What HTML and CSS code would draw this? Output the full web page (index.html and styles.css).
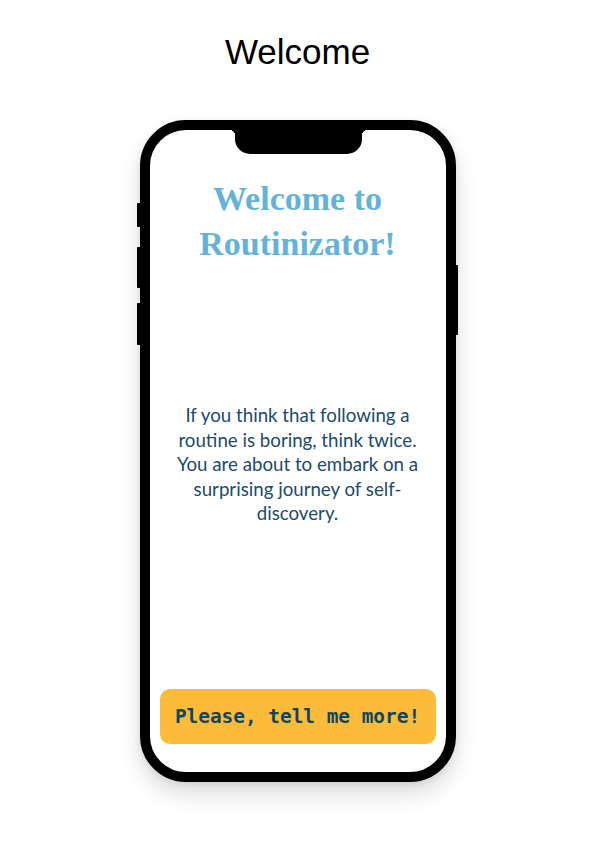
FILE: index.html
```html
<!DOCTYPE html>
<html lang="en">
<head>
<meta charset="utf-8">
<title>Welcome</title>
<link rel="stylesheet" href="styles.css">
</head>
<body>
<main class="page">
  <h1 class="page-title">Welcome</h1>
  <div class="phone">
    <span class="side-btn side-btn-1"></span>
    <span class="side-btn side-btn-2"></span>
    <span class="side-btn side-btn-3"></span>
    <span class="power-btn"></span>
    <div class="screen">
      <div class="notch"></div>
      <h2 class="app-title">Welcome to Routinizator!</h2>
      <p class="intro">If you think that following a routine is boring, think twice. You are about to embark on a surprising journey of self-discovery.</p>
      <button class="cta" type="button">Please, tell me more!</button>
    </div>
  </div>
</main>
</body>
</html>
```

FILE: styles.css
```css
* { box-sizing: border-box; }

html, body {
  margin: 0;
  padding: 0;
  background: #ffffff;
}

.page {
  display: flex;
  flex-direction: column;
  align-items: center;
  width: 595px;
  min-height: 843px;
}

.page-title {
  margin: 0;
  padding-top: 32px;
  font-family: "Liberation Sans", Arial, sans-serif;
  font-weight: 400;
  font-size: 35px;
  line-height: 40px;
  color: #000;
}

.phone {
  position: relative;
  margin-top: 48px;
  width: 316px;
  height: 662px;
  border: 10px solid #000;
  border-radius: 46px;
  background: #fff;
  box-shadow: 0 12px 22px rgba(0, 0, 0, 0.14), 0 2px 6px rgba(0, 0, 0, 0.08);
}

.side-btn {
  position: absolute;
  left: -13px;
  width: 4px;
  background: #000;
  border-radius: 1px 0 0 1px;
}
.side-btn-1 { top: 73px; height: 24px; }
.side-btn-2 { top: 117px; height: 41px; }
.side-btn-3 { top: 173px; height: 42px; }

.power-btn {
  position: absolute;
  right: -12px;
  top: 135px;
  width: 3px;
  height: 70px;
  background: #000;
  border-radius: 0 1px 1px 0;
}

.screen {
  position: relative;
  height: 100%;
  border-radius: 36px;
  display: flex;
  flex-direction: column;
  align-items: center;
  padding: 46px 10px 28px;
}

.notch {
  position: absolute;
  top: 0;
  left: 85px;
  width: 127px;
  height: 24px;
  background: #000;
  border-radius: 0 0 15px 15px;
}
.notch::before,
.notch::after {
  content: "";
  position: absolute;
  top: 0;
  width: 6px;
  height: 6px;
}
.notch::before {
  left: -6px;
  background: radial-gradient(circle at 0 100%, transparent 6px, #000 6.5px);
}
.notch::after {
  right: -6px;
  background: radial-gradient(circle at 100% 100%, transparent 6px, #000 6.5px);
}

.app-title {
  margin: 0;
  width: 230px;
  text-align: center;
  font-family: "Liberation Serif", "Times New Roman", serif;
  font-weight: 700;
  font-size: 34px;
  line-height: 45px;
  color: #63b3d9;
}

.intro {
  margin: 137px 0 0;
  width: 262px;
  text-align: center;
  font-family: Lato, "Noto Sans", sans-serif;
  font-size: 18.7px;
  line-height: 24.5px;
  color: #1b4b69;
}

.cta {
  margin-top: auto;
  width: 100%;
  height: 55px;
  border: none;
  border-radius: 10px;
  background: #fdbb3a;
  font-family: "DejaVu Sans Mono", "Liberation Mono", monospace;
  font-weight: 700;
  font-size: 19.4px;
  color: #0d4762;
  padding: 0;
}
```
